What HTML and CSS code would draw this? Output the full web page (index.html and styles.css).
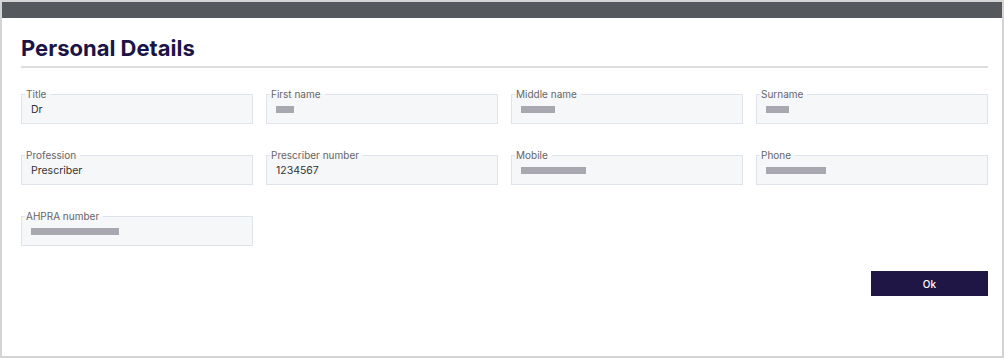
FILE: index.html
```html
<!DOCTYPE html>
<html lang="en">
<head>
  <meta charset="UTF-8" />
  <title>Personal Details</title>
  <link rel="stylesheet" href="styles.css">
</head>
<body>
  <div class="frame">
    <div class="top-bar"></div>

    <main class="content">
      <h1 class="page-title">Personal Details</h1>

      <div class="fields">
        <fieldset class="field">
          <legend>Title</legend>
          <div class="value">Dr</div>
        </fieldset>
        <fieldset class="field">
          <legend>First name</legend>
          <div class="value"><span class="mask" style="width: 18px"></span></div>
        </fieldset>
        <fieldset class="field">
          <legend>Middle name</legend>
          <div class="value"><span class="mask" style="width: 34px"></span></div>
        </fieldset>
        <fieldset class="field">
          <legend>Surname</legend>
          <div class="value"><span class="mask" style="width: 23px"></span></div>
        </fieldset>

        <fieldset class="field">
          <legend>Profession</legend>
          <div class="value">Prescriber</div>
        </fieldset>
        <fieldset class="field">
          <legend>Prescriber number</legend>
          <div class="value">1234567</div>
        </fieldset>
        <fieldset class="field">
          <legend>Mobile</legend>
          <div class="value"><span class="mask" style="width: 65px"></span></div>
        </fieldset>
        <fieldset class="field">
          <legend>Phone</legend>
          <div class="value"><span class="mask" style="width: 60px"></span></div>
        </fieldset>

        <fieldset class="field">
          <legend>AHPRA number</legend>
          <div class="value"><span class="mask" style="width: 88px"></span></div>
        </fieldset>
      </div>

      <div class="actions">
        <button type="button" class="ok-btn">Ok</button>
      </div>
    </main>
  </div>
</body>
</html>
```

FILE: styles.css
```css
* {
  box-sizing: border-box;
  margin: 0;
  padding: 0;
}

body {
  font-family: 'Inter', 'Noto Sans', sans-serif;
  background: #fff;
}

.frame {
  width: 1004px;
  height: 358px;
  border: 2px solid #d4d4d4;
  background: #fff;
}

.top-bar {
  height: 16px;
  background: #55585c;
}

.content {
  padding: 0 14px 0 19px;
}

.page-title {
  margin-top: 17px;
  font-size: 22px;
  line-height: 26px;
  font-weight: 700;
  color: #1b1547;
  padding-bottom: 5px;
  border-bottom: 2px solid #dddddd;
}

.fields {
  display: grid;
  grid-template-columns: repeat(4, 232px);
  column-gap: 13px;
  row-gap: 25px;
  margin-top: 20px;
}

.field {
  border: 1px solid #dfe4ea;
  background: #f6f7f9;
  padding: 0 9px;
  min-width: 0;
}

.field legend {
  margin-left: -6px;
  padding: 0 4px 0 1px;
  font-size: 10px;
  line-height: 12px;
  color: #666;
}

.value {
  height: 23px;
  padding-bottom: 4px;
  display: flex;
  align-items: center;
  font-size: 10.5px;
  color: #333;
}

.mask {
  display: block;
  height: 7px;
  background: #a9a7af;
}

.actions {
  display: flex;
  justify-content: flex-end;
  margin-top: 25px;
}

.ok-btn {
  width: 117px;
  height: 25px;
  border: none;
  background: #1f1646;
  color: #fff;
  font-family: inherit;
  font-size: 10px;
  font-weight: 500;
}
```
